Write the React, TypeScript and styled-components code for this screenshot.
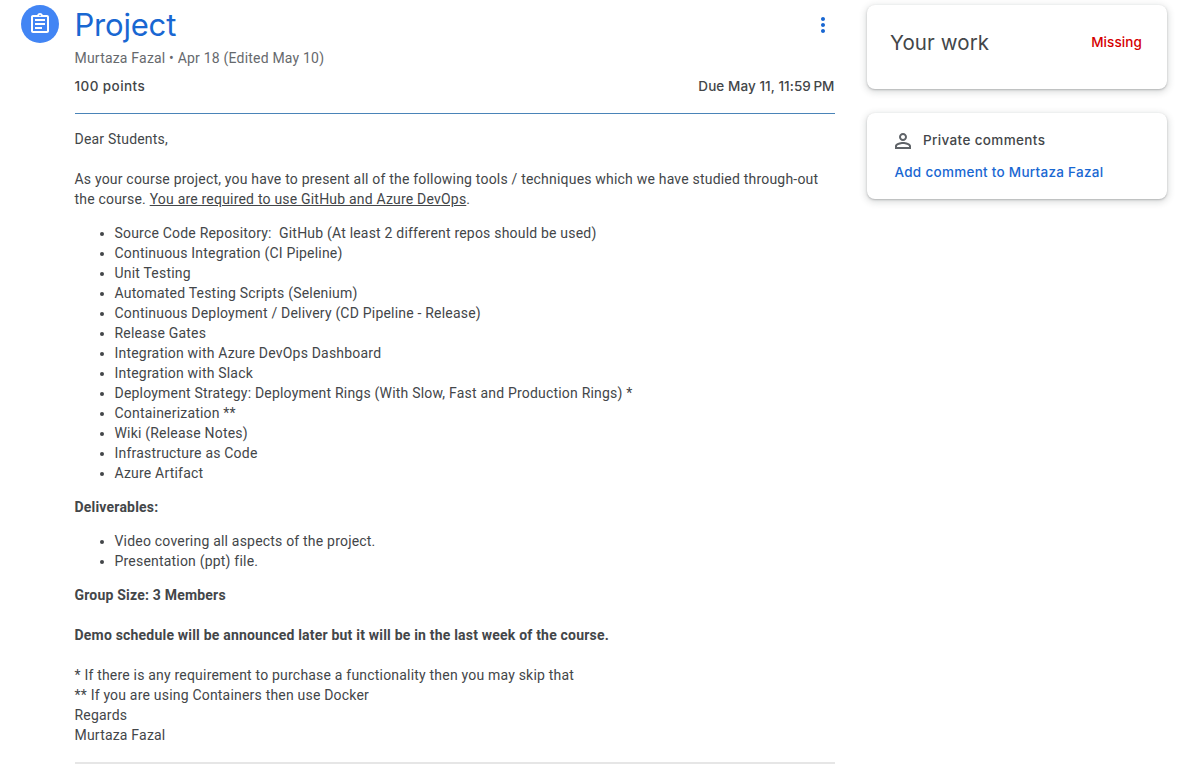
import React from "react";
import styled, { createGlobalStyle } from "styled-components";

const GlobalStyle = createGlobalStyle`
  * { box-sizing: border-box; }
  body {
    margin: 0;
    background: #fff;
    color: #434649;
    font: 400 14px/20px Roboto, "Liberation Sans", sans-serif;
    letter-spacing: 0.2px;
    overflow: hidden;
  }
`;

const display = `Inter, "Open Sans", sans-serif`;

const Page = styled.div`
  display: flex;
  align-items: flex-start;
  width: 1195px;
  height: 766px;
  padding: 5px 28px 0 21px;
  overflow: hidden;
`;

const Badge = styled.div`
  display: flex;
  align-items: center;
  justify-content: center;
  flex: none;
  width: 38px;
  height: 38px;
  margin-right: 15.5px;
  border-radius: 50%;
  background: #4285f4;
`;

const Main = styled.main`
  flex: none;
  width: 760px;
  margin-right: 32.5px;
`;

const TitleRow = styled.header`
  display: flex;
  justify-content: space-between;
  height: 43px;
`;

const Title = styled.h1`
  margin: 0;
  font: 400 31px/40px ${display};
  letter-spacing: -0.2px;
  color: #1967d2;
`;

const MenuButton = styled.button`
  display: flex;
  align-items: center;
  justify-content: center;
  width: 24px;
  height: 40px;
  padding: 0;
  border: 0;
  background: none;
`;

const Meta = styled.div`
  color: #66696d;
`;

const Facts = styled.div`
  display: flex;
  justify-content: space-between;
  height: 46px;
  padding-top: 8px;
  border-bottom: 1px solid #4a84b8;
  font: 500 13.5px/20px ${display};
  letter-spacing: 0.42px;
`;

const Due = styled.span`
  letter-spacing: 0.07px;
`;

const Body = styled.article`
  padding: 15px 0 17px;
  border-bottom: 2px solid #e6e6e6;
`;

const Text = styled.p<{ $gap?: boolean }>`
  margin: 0 0 ${(p) => (p.$gap ? 20 : 0)}px;
`;

const List = styled.ul`
  margin: 14px 0;
  padding: 0 0 0 40px;
`;

const Side = styled.aside`
  display: flex;
  flex-direction: column;
  gap: 24px;
  width: 300px;
`;

const Card = styled.section`
  border-radius: 8px;
  background: #fff;
  box-shadow: 0 1px 2px rgba(60, 64, 67, 0.3), 0 2px 6px 2px rgba(60, 64, 67, 0.15);
`;

const WorkCard = styled(Card)`
  display: flex;
  justify-content: space-between;
  height: 84px;
  padding: 22px 25px 0 23px;
`;

const CardTitle = styled.h2`
  margin: 0;
  font: 400 20.5px/32px ${display};
  letter-spacing: 0.1px;
`;

const Status = styled.span`
  font: 500 13.5px/31px ${display};
  letter-spacing: 0.1px;
  color: #d50000;
`;

const CommentCard = styled(Card)`
  height: 86px;
  padding: 17px 24px 0 27.5px;
  font: 500 13.5px/20px ${display};
`;

const CommentHead = styled.div`
  display: flex;
  align-items: flex-start;
  gap: 11px;
  height: 22px;
  margin-left: -0.5px;
  letter-spacing: 0.36px;
`;

const CommentLink = styled.a`
  display: block;
  margin-top: 10px;
  color: #1967d2;
  letter-spacing: 0.28px;
`;

const tools = [
  "Source Code Repository:\u00a0 GitHub (At least 2 different repos should be used)",
  "Continuous Integration (CI Pipeline)",
  "Unit Testing",
  "Automated Testing Scripts (Selenium)",
  "Continuous Deployment / Delivery (CD Pipeline - Release)",
  "Release Gates",
  "Integration with Azure DevOps Dashboard",
  "Integration with Slack",
  "Deployment Strategy: Deployment Rings (With Slow, Fast and Production Rings) *",
  "Containerization **",
  "Wiki (Release Notes)",
  "Infrastructure as Code",
  "Azure Artifact",
];

const deliverables = ["Video covering all aspects of the project.", "Presentation (ppt) file."];

export default function App() {
  return (
    <Page>
      <GlobalStyle />
      <Badge>
        <svg width="24" height="24" viewBox="0 0 24 24" fill="#fff">
          <path d="M7 15h7v2H7zm0-4h10v2H7zm0-4h10v2H7z" />
          <path d="M19 3h-4.18C14.4 1.84 13.3 1 12 1c-1.3 0-2.4.84-2.82 2H5c-1.1 0-2 .9-2 2v14c0 1.1.9 2 2 2h14c1.1 0 2-.9 2-2V5c0-1.1-.9-2-2-2zm-7-.25c.41 0 .75.34.75.75s-.34.75-.75.75-.75-.34-.75-.75.34-.75.75-.75zM19 19H5V5h14v14z" />
        </svg>
      </Badge>
      <Main>
        <TitleRow>
          <Title>Project</Title>
          <MenuButton aria-label="Options">
            <svg width="24" height="24" viewBox="0 0 24 24" fill="#1967d2">
              <path d="M12 8c1.1 0 2-.9 2-2s-.9-2-2-2-2 .9-2 2 .9 2 2 2zm0 2c-1.1 0-2 .9-2 2s.9 2 2 2 2-.9 2-2-.9-2-2-2zm0 6c-1.1 0-2 .9-2 2s.9 2 2 2 2-.9 2-2-.9-2-2-2z" />
            </svg>
          </MenuButton>
        </TitleRow>
        <Meta>Murtaza Fazal • Apr 18 (Edited May 10)</Meta>
        <Facts>
          <span>100 points</span>
          <Due>Due May 11, 11:59{"\u202f"}PM</Due>
        </Facts>
        <Body>
          <Text $gap>Dear Students,</Text>
          <Text>
            As your course project, you have to present all of the following tools / techniques which we have studied
            through-out the course. <u>You are required to use GitHub and Azure DevOps</u>.
          </Text>
          <List>
            {tools.map((item) => (
              <li key={item}>{item}</li>
            ))}
          </List>
          <b>Deliverables:</b>
          <List>
            {deliverables.map((item) => (
              <li key={item}>{item}</li>
            ))}
          </List>
          <Text $gap>
            <b>Group Size: 3 Members</b>
          </Text>
          <Text $gap>
            <b>Demo schedule will be announced later but it will be in the last week of the course.</b>
          </Text>
          <Text>* If there is any requirement to purchase a functionality then you may skip that</Text>
          <Text>** If you are using Containers then use Docker</Text>
          <Text>Regards</Text>
          <Text>Murtaza Fazal</Text>
        </Body>
      </Main>
      <Side>
        <WorkCard>
          <CardTitle>Your work</CardTitle>
          <Status>Missing</Status>
        </WorkCard>
        <CommentCard>
          <CommentHead>
            <svg width="18" height="22" viewBox="3 1 18 22" fill="#5f6368">
              <path d="M12 4C9.79 4 8 5.79 8 8s1.79 4 4 4 4-1.79 4-4-1.79-4-4-4zm0 6c-1.1 0-2-.9-2-2s.9-2 2-2 2 .9 2 2-.9 2-2 2zm0 3c-2.67 0-8 1.34-8 4v3h16v-3c0-2.66-5.33-4-8-4zm6 5H6v-.99c.2-.72 3.3-2.01 6-2.01s5.8 1.29 6 2v1z" />
            </svg>
            <span>Private comments</span>
          </CommentHead>
          <CommentLink>Add comment to Murtaza Fazal</CommentLink>
        </CommentCard>
      </Side>
    </Page>
  );
}
